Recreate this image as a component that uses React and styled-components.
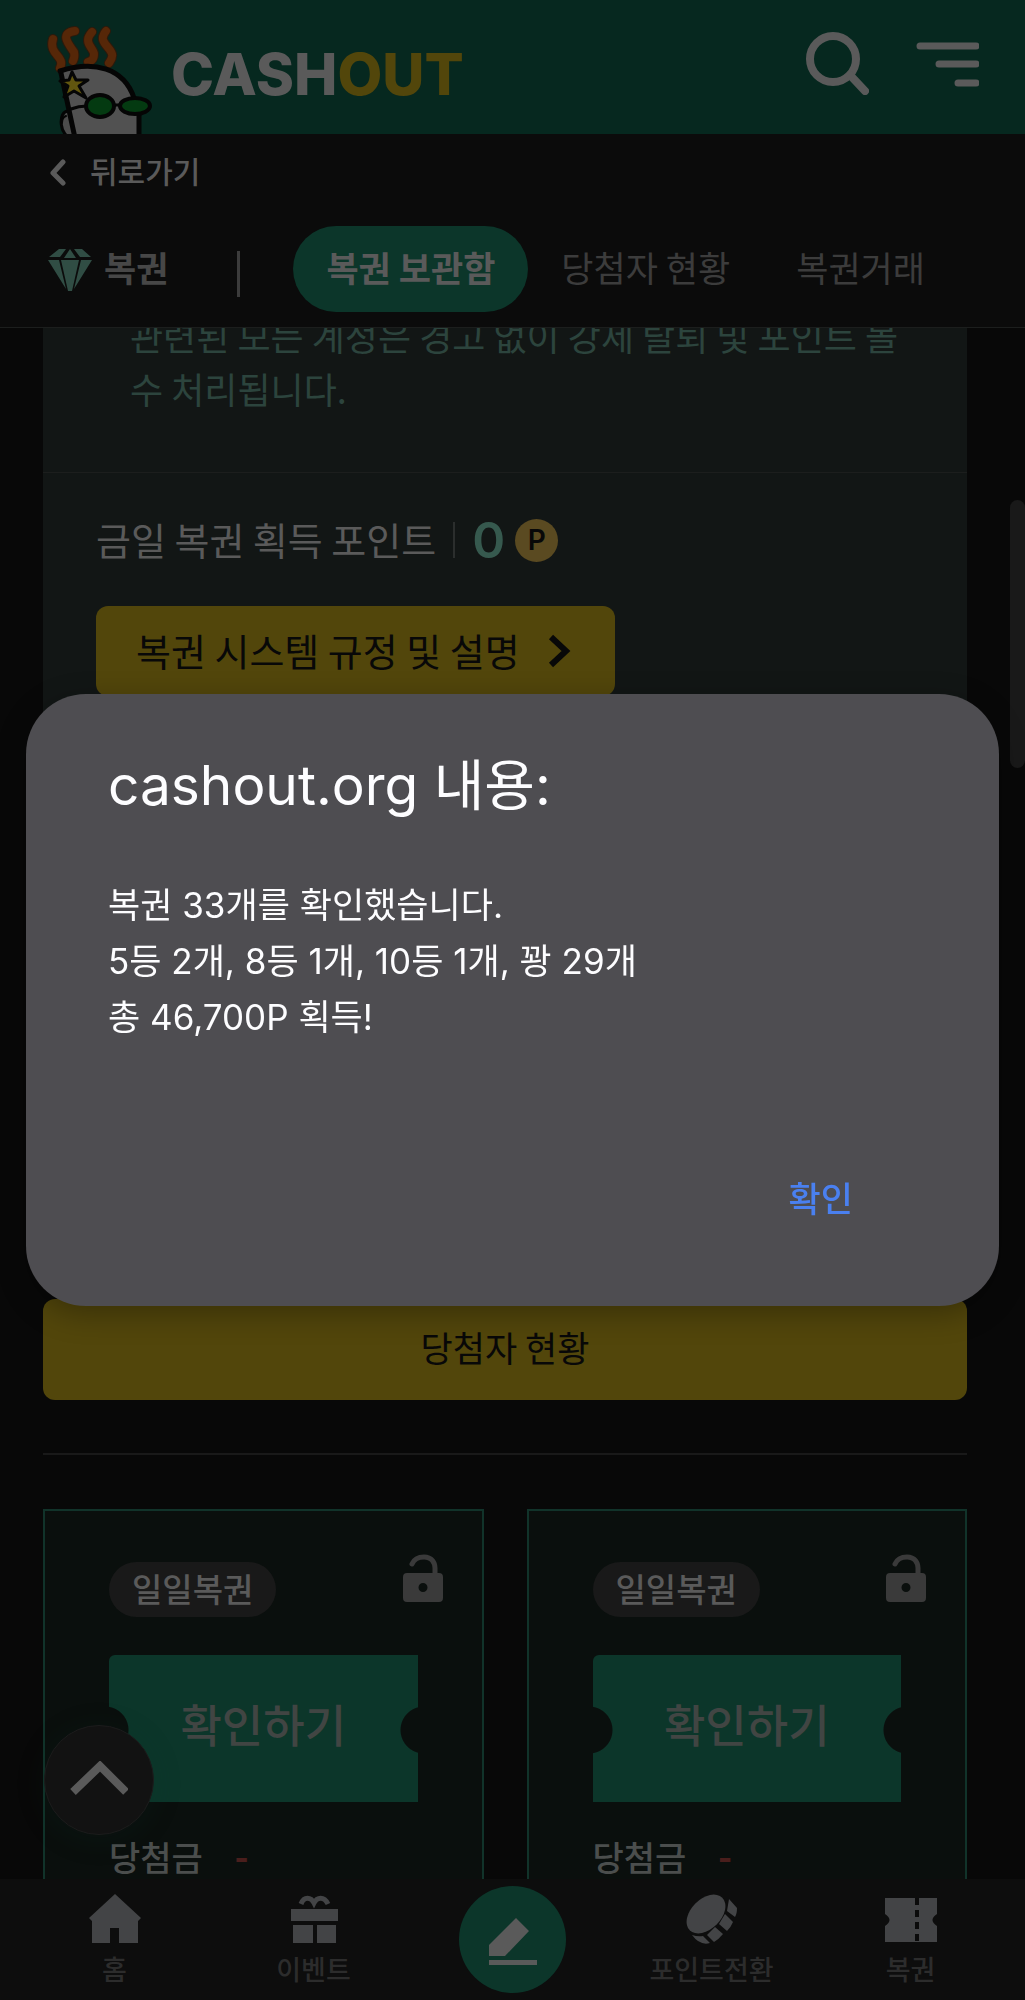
import styled, {createGlobalStyle} from "styled-components";

const colors = {
    page: '#080808',
    bar: '#0b0b0b',
    brand: '#06281f',
    green: '#0c362a',
    yellow: '#52460b',
    panel: '#121615',
    card: '#0a0f0d',
    line: '#1c1e1d',
    text: '#5a5a5a',
    muted: '#3c3c3c',
    modal: '#4e4d51',
}

const tabs = ['복권 보관함', '당첨자 현황', '복권거래']
const tickets = [1, 2]

const App = () => {
    return (
        <>
            <GlobalStyle/>
            <Screen>
                <Header>
                    <Logo href="#">
                        <Mascot/>
                        <LogoText>CASH<span>OUT</span></LogoText>
                    </Logo>
                    <HeaderButtons>
                        <IconButton aria-label="검색"><SearchIcon/></IconButton>
                        <IconButton aria-label="메뉴"><MenuIcon/></IconButton>
                    </HeaderButtons>
                </Header>
                <BackLink href="#">
                    <svg width="16" height="28" viewBox="0 0 16 28" fill="none" stroke="currentColor" strokeWidth="5" strokeLinecap="round" strokeLinejoin="round">
                        <path d="M13 4 3 15l10 10"/>
                    </svg>
                    <Label>뒤로가기</Label>
                </BackLink>
                <TabBar>
                    <TabBarTitle><DiamondIcon/><Label>복권</Label></TabBarTitle>
                    <TabBarDivider/>
                    {tabs.map((tab, i) => <Tab href="#" key={tab} $active={i === 0}>{tab}</Tab>)}
                </TabBar>
                <Main>
                    <Panel>
                        <Notice>
                            <p>관련된 모든 계정은 경고 없이 강제 탈퇴 및 포인트 몰수 처리됩니다.</p>
                        </Notice>
                        <PanelBody>
                            <PointRow>
                                <Label>금일 복권 획득 포인트</Label>
                                <PointDivider/>
                                <PointValue>0</PointValue>
                                <PointBadge>P</PointBadge>
                            </PointRow>
                            <RulesButton>
                                <Label>복권 시스템 규정 및 설명</Label>
                                <svg width="24" height="34" viewBox="0 0 24 34" fill="none" stroke="currentColor" strokeWidth="6">
                                    <path d="M3 3 18 17 3 31"/>
                                </svg>
                            </RulesButton>
                        </PanelBody>
                    </Panel>
                    <WinnersButton>당첨자 현황</WinnersButton>
                    <Divider/>
                    <Cards>
                        {tickets.map(id => (
                            <Card key={id}>
                                <CardHead>
                                    <CardLabel>일일복권</CardLabel>
                                    <LockIcon/>
                                </CardHead>
                                <Ticket>확인하기</Ticket>
                                <Prize>당첨금 <span>-</span></Prize>
                            </Card>
                        ))}
                    </Cards>
                </Main>
                <BottomNav>
                    <NavItem href="#"><HomeIcon/>홈</NavItem>
                    <NavItem href="#"><GiftIcon/>이벤트</NavItem>
                    <WriteButton aria-label="글쓰기"><PenIcon/></WriteButton>
                    <NavItem href="#"><CoinIcon/>포인트전환</NavItem>
                    <NavItem href="#"><TicketIcon/>복권</NavItem>
                </BottomNav>
                <TopButton aria-label="맨 위로">
                    <svg width="58" height="38" viewBox="0 0 58 38" fill="none" stroke="currentColor" strokeWidth="8">
                        <path d="M3 31 30 5l26 26"/>
                    </svg>
                </TopButton>
                <ScrollThumb/>
            </Screen>
            <Overlay>
                <Modal role="alertdialog" aria-labelledby="alert-title" aria-describedby="alert-text">
                    <ModalTitle id="alert-title">cashout.org 내용:</ModalTitle>
                    <ModalText id="alert-text">
                        복권 33개를 확인했습니다.<br/>
                        5등 2개, 8등 1개, 10등 1개, 꽝 29개<br/>
                        총 46,700P 획득!
                    </ModalText>
                    <ModalButton>확인</ModalButton>
                </Modal>
            </Overlay>
        </>
    );
}

export default App

const Mascot = () => (
    <svg width="108" height="108" viewBox="0 0 108 108" fill="none" strokeLinecap="round" strokeLinejoin="round">
        <g stroke="#2c1a0c" strokeWidth="10">
            <path d="M7 13C2 29 20 30 14 42"/>
            <path d="M29 5C12 7 24 20 28 26 29 30 28 33 27 35"/>
            <path d="M46 6C36 17 48 22 48 28 48 34 45 35 42 36"/>
            <path d="M60 5C51 16 64 20 66 28 67 32 65 34 63 37"/>
        </g>
        <g stroke="#562708" strokeWidth="8">
            <path d="M7 13C2 29 20 30 14 42"/>
            <path d="M29 5C12 7 24 20 28 26 29 30 28 33 27 35"/>
            <path d="M46 6C36 17 48 22 48 28 48 34 45 35 42 36"/>
            <path d="M60 5C51 16 64 20 66 28 67 32 65 34 63 37"/>
        </g>
        <path d="M27 112C13 112 11 84 23 85" fill="#4c4c4c" stroke="#050505" strokeWidth="3"/>
        <path d="M20 90c-3 1-4 4-4 7" stroke="#050505" strokeWidth="2"/>
        <path d="M29 112 15 46C48 34 78 42 88 72L93 86v26Z" fill="#515151"/>
        <path d="M29 112 15 47" stroke="#050505" strokeWidth="5"/>
        <path d="M14 45C48 34 78 42 88 72" stroke="#050505" strokeWidth="5"/>
        <path d="M93 86v26" stroke="#050505" strokeWidth="5"/>
        <path d="M25 83c5-2 10-3 16-3M68 79h6" stroke="#050505" strokeWidth="3"/>
        <path d="M26 46l4 8 12 0-9 6 7 12-12-7-10 6 4-11-8-5 9-1Z" fill="#61560f" stroke="#050505" strokeWidth="3"/>
        <ellipse cx="54" cy="80" rx="14" ry="11" fill="#043a11" stroke="#050505" strokeWidth="4"/>
        <ellipse cx="89" cy="80" rx="15" ry="8" fill="#043a11" stroke="#050505" strokeWidth="4"/>
    </svg>
)

const SearchIcon = () => (
    <svg width="64" height="64" viewBox="0 0 64 64" fill="none" stroke="currentColor" strokeWidth="8" strokeLinecap="round">
        <circle cx="28" cy="28" r="23"/>
        <path d="m45 44 15 16"/>
    </svg>
)

const MenuIcon = () => (
    <svg width="64" height="64" viewBox="0 0 64 64" fill="none" stroke="currentColor" strokeWidth="7" strokeLinecap="round">
        <path d="M5 15h56M24 33h37M43 52h18"/>
    </svg>
)

const DiamondIcon = () => (
    <svg width="48" height="48" viewBox="0 0 48 48" fill="#304d44">
        <path d="M13 4h7l-6 8H3ZM24 4l6 9H18ZM28 4h8l9 8H34ZM2 15h11l7 29ZM15 15h18l-7 31h-4ZM35 15h11L28 44Z"/>
    </svg>
)

const LockIcon = () => (
    <svg width="40" height="48" viewBox="0 0 40 48">
        <path d="M9 10C12 3 18 3 21 3c8 0 11 6 11 11v8" fill="none" stroke="#3a3a3a" strokeWidth="5" strokeLinecap="round"/>
        <path fillRule="evenodd" fill="#3a3a3a" d="M4 19h32q4 0 4 4v21q0 4-4 4H4q-4 0-4-4V23q0-4 4-4Zm16 10a4 4 0 1 0 0 9 4 4 0 0 0 0-9Z"/>
    </svg>
)

const HomeIcon = () => (
    <svg width="52" height="52" viewBox="0 0 52 52" fill="#434446">
        <path d="m26 1 26 24-3 3v22H30V35h-9v15H3V28l-3-3Z"/>
    </svg>
)

const GiftIcon = () => (
    <svg width="52" height="52" viewBox="0 0 52 52" fill="#434446">
        <path d="M3 16h47v12H3ZM5 32h20v18H5ZM29 32h19v18H29Z"/>
        <path d="M13 11c3-8 10-7 13-1 3-6 10-7 14 1" fill="none" stroke="#434446" strokeWidth="5"/>
    </svg>
)

const CoinIcon = () => (
    <svg width="52" height="52" viewBox="0 0 52 52" fill="#434446">
        <ellipse cx="21" cy="21" rx="23" ry="15" transform="rotate(-45 21 21)"/>
        <path d="m44 6 8 9q0 6-2 9l-8-6ZM40 21l8 8q-2 5-6 9l-8-7ZM30 34l8 7q-4 5-9 8l-7-7ZM7 42q6 2 11 1l7 7q-10 3-18-8Z"/>
    </svg>
)

const TicketIcon = () => (
    <svg width="52" height="52" viewBox="0 0 52 52" fill="#434446">
        <path d="M0 5h52v16q-9 6 0 12v16H0V33q9-6 0-12Z"/>
        <path d="M32 5v44" stroke={colors.bar} strokeWidth="4" strokeDasharray="7 5"/>
    </svg>
)

const PenIcon = () => (
    <svg width="54" height="54" viewBox="0 0 54 54" fill="currentColor">
        <path d="M3 32 30 5l13 13-24 25H3ZM3 47h48v5H3Z"/>
    </svg>
)

const GlobalStyle = createGlobalStyle`
  * {
    box-sizing: border-box;
    margin: 0;
    padding: 0;
  }
  body {
    background: ${colors.page};
    color: ${colors.text};
    font-family: "Noto Sans CJK KR", sans-serif;
    font-size: 35px;
    overflow: hidden;
  }
  a {
    color: inherit;
    text-decoration: none;
  }
  button {
    border: none;
    background: none;
    color: inherit;
    font: inherit;
    cursor: pointer;
  }
  svg {
    display: block;
    flex-shrink: 0;
  }
`

const Screen = styled.div`
  display: flex;
  flex-direction: column;
  height: 100vh;
`
// Hangul sits low in its line box, so labels beside icons get some room below
const Label = styled.span`
  padding-bottom: 4px;
`
const Header = styled.header`
  display: flex;
  justify-content: space-between;
  flex-shrink: 0;
  height: 134px;
  padding: 0 46px;
  background: ${colors.brand};
`
const Logo = styled.a`
  display: flex;
  align-items: flex-end;
  gap: 17px;
`
const LogoText = styled.span`
  font-family: Inter, sans-serif;
  font-size: 58px;
  font-weight: 800;
  line-height: 58px;
  padding-bottom: 31px;
  span {
    color: ${colors.yellow};
  }
`
const HeaderButtons = styled.div`
  display: flex;
  align-items: flex-start;
  gap: 46px;
  padding-top: 31px;
`
const IconButton = styled.button`
  width: 64px;
  height: 64px;
`
const BackLink = styled.a`
  display: flex;
  align-items: center;
  flex-shrink: 0;
  gap: 24px;
  height: 76px;
  padding: 0 50px;
  background: ${colors.bar};
  font-size: 30px;
  font-weight: 500;
  line-height: 40px;
`
const TabBar = styled.nav`
  display: flex;
  align-items: center;
  flex-shrink: 0;
  height: 118px;
  padding: 0 46px;
  background: ${colors.bar};
  border-bottom: 1px solid ${colors.line};
`
const TabBarTitle = styled.h1`
  display: flex;
  align-items: center;
  gap: 10px;
  color: #474747;
  font-size: 35px;
  font-weight: 700;
`
const TabBarDivider = styled.span`
  width: 3px;
  height: 46px;
  margin: 10px 53px 0 69px;
  background: ${colors.muted};
`
const Tab = styled.a`
  padding: 0 33px 4px;
  border-radius: 43px;
  background: ${({$active}) => $active ? colors.green : 'none'};
  color: ${({$active}) => $active ? colors.text : colors.muted};
  font-weight: ${({$active}) => $active ? 700 : 400};
  line-height: 82px;
  white-space: nowrap;
`
const Main = styled.main`
  flex: 1;
  min-height: 0;
  padding: 0 58px 0 43px;
  overflow: hidden;
`
const Panel = styled.section`
  min-height: 928px;
  background: ${colors.panel};
`
const Notice = styled.div`
  display: flex;
  flex-direction: column;
  justify-content: flex-end;
  height: 145px;
  padding: 0 50px 57px 87px;
  border-bottom: 1px solid ${colors.line};
  overflow: hidden;
  color: #2c443d;
  font-size: 36px;
  line-height: 53px;
`
const PanelBody = styled.div`
  padding: 40px 53px;
`
const PointRow = styled.p`
  display: flex;
  align-items: center;
  height: 54px;
  margin-bottom: 39px;
  font-size: 38px;
`
const PointDivider = styled.span`
  width: 2px;
  height: 36px;
  margin: 0 17px;
  background: #2b2e2d;
`
const PointValue = styled.strong`
  margin-right: 10px;
  color: #36594e;
  font-family: Inter, sans-serif;
  font-size: 50px;
  font-weight: 600;
  line-height: 54px;
`
const PointBadge = styled.span`
  width: 43px;
  height: 43px;
  border-radius: 50%;
  background: #5a4a21;
  color: #080808;
  font-family: Inter, sans-serif;
  font-size: 28px;
  font-weight: 600;
  line-height: 43px;
  text-align: center;
`
const RulesButton = styled.button`
  display: flex;
  align-items: center;
  gap: 28px;
  height: 90px;
  padding: 0 43px 0 40px;
  border-radius: 12px;
  background: ${colors.yellow};
  color: #080808;
  font-size: 38px;
  font-weight: 400;
`
const WinnersButton = styled.button`
  display: block;
  width: 100%;
  height: 101px;
  margin-top: 43px;
  padding-bottom: 6px;
  border-radius: 12px;
  background: ${colors.yellow};
  color: #080808;
  font-size: 35px;
  font-weight: 400;
`
const Divider = styled.hr`
  height: 2px;
  margin: 53px 0 54px;
  border: none;
  background: #191919;
`
const Cards = styled.div`
  display: grid;
  grid-template-columns: 1fr 1fr;
  gap: 43px;
`
const Card = styled.article`
  padding: 43px 39px 60px 64px;
  border: 2px solid #11332a;
  background: ${colors.card};
`
const CardHead = styled.div`
  display: flex;
  justify-content: space-between;
  height: 63px;
  margin-bottom: 38px;
`
const CardLabel = styled.span`
  align-self: flex-end;
  padding: 0 23px 3px;
  border-radius: 28px;
  background: #191919;
  font-size: 33px;
  font-weight: 500;
  line-height: 52px;
`
const Ticket = styled.button`
  display: block;
  width: calc(100% - 25px);
  height: 147px;
  margin-bottom: 26px;
  padding-bottom: 10px;
  border-radius: 6px 0 0 0;
  background:
    radial-gradient(circle at -4px 75px, ${colors.card} 23px, transparent 24px),
    radial-gradient(circle at calc(100% + 6px) 75px, ${colors.card} 23px, transparent 24px),
    ${colors.green};
  color: #414543;
  font-size: 45px;
  font-weight: 500;
`
const Prize = styled.p`
  color: #4b4e4d;
  font-size: 34px;
  font-weight: 500;
  line-height: 54px;
  span {
    margin-left: 24px;
    color: #4a1e1c;
    font-size: 38px;
    font-weight: 700;
  }
`
const BottomNav = styled.nav`
  display: grid;
  grid-template-columns: repeat(5, 1fr);
  align-items: center;
  justify-items: center;
  flex-shrink: 0;
  height: 121px;
  padding: 0 15px;
  background: #0d0d0d;
`
const NavItem = styled.a`
  display: flex;
  flex-direction: column;
  align-items: center;
  gap: 6px;
  color: #2c2c2c;
  font-size: 27px;
  font-weight: 500;
  line-height: 36px;
`
const WriteButton = styled.button`
  display: flex;
  align-items: center;
  justify-content: center;
  width: 107px;
  height: 107px;
  border-radius: 50%;
  background: ${colors.green};
`
const TopButton = styled.button`
  position: fixed;
  left: 44px;
  bottom: 165px;
  display: flex;
  align-items: center;
  justify-content: center;
  width: 110px;
  height: 110px;
  border: 1px solid #1c1c1c;
  border-radius: 50%;
  background: #121212;
  box-shadow: 0 4px 30px rgba(12, 54, 42, 0.15);
`
const ScrollThumb = styled.div`
  position: fixed;
  top: 25%;
  right: 0;
  width: 15px;
  height: 268px;
  border-radius: 8px;
  background: #191919;
`
const Overlay = styled.div`
  position: fixed;
  inset: 0;
  display: flex;
  align-items: center;
  padding: 0 26px;
`
const Modal = styled.div`
  display: flex;
  flex-direction: column;
  width: 100%;
  padding: 55px 82px 74px;
  border-radius: 60px;
  background: ${colors.modal};
  box-shadow: 0 8px 30px rgba(0, 0, 0, 0.3);
  color: #fdfdff;
  font-family: Inter, "Noto Sans CJK KR", sans-serif;
`
const ModalTitle = styled.h2`
  margin-bottom: 56px;
  font-size: 55px;
  font-weight: 400;
  line-height: 72px;
`
const ModalText = styled.p`
  font-size: 35px;
  font-weight: 400;
  line-height: 56px;
`
const ModalButton = styled.button`
  align-self: flex-end;
  height: 72px;
  margin-top: 115px;
  padding: 0 64px;
  color: #4a80f0;
  font-size: 35px;
  font-weight: 500;
`
